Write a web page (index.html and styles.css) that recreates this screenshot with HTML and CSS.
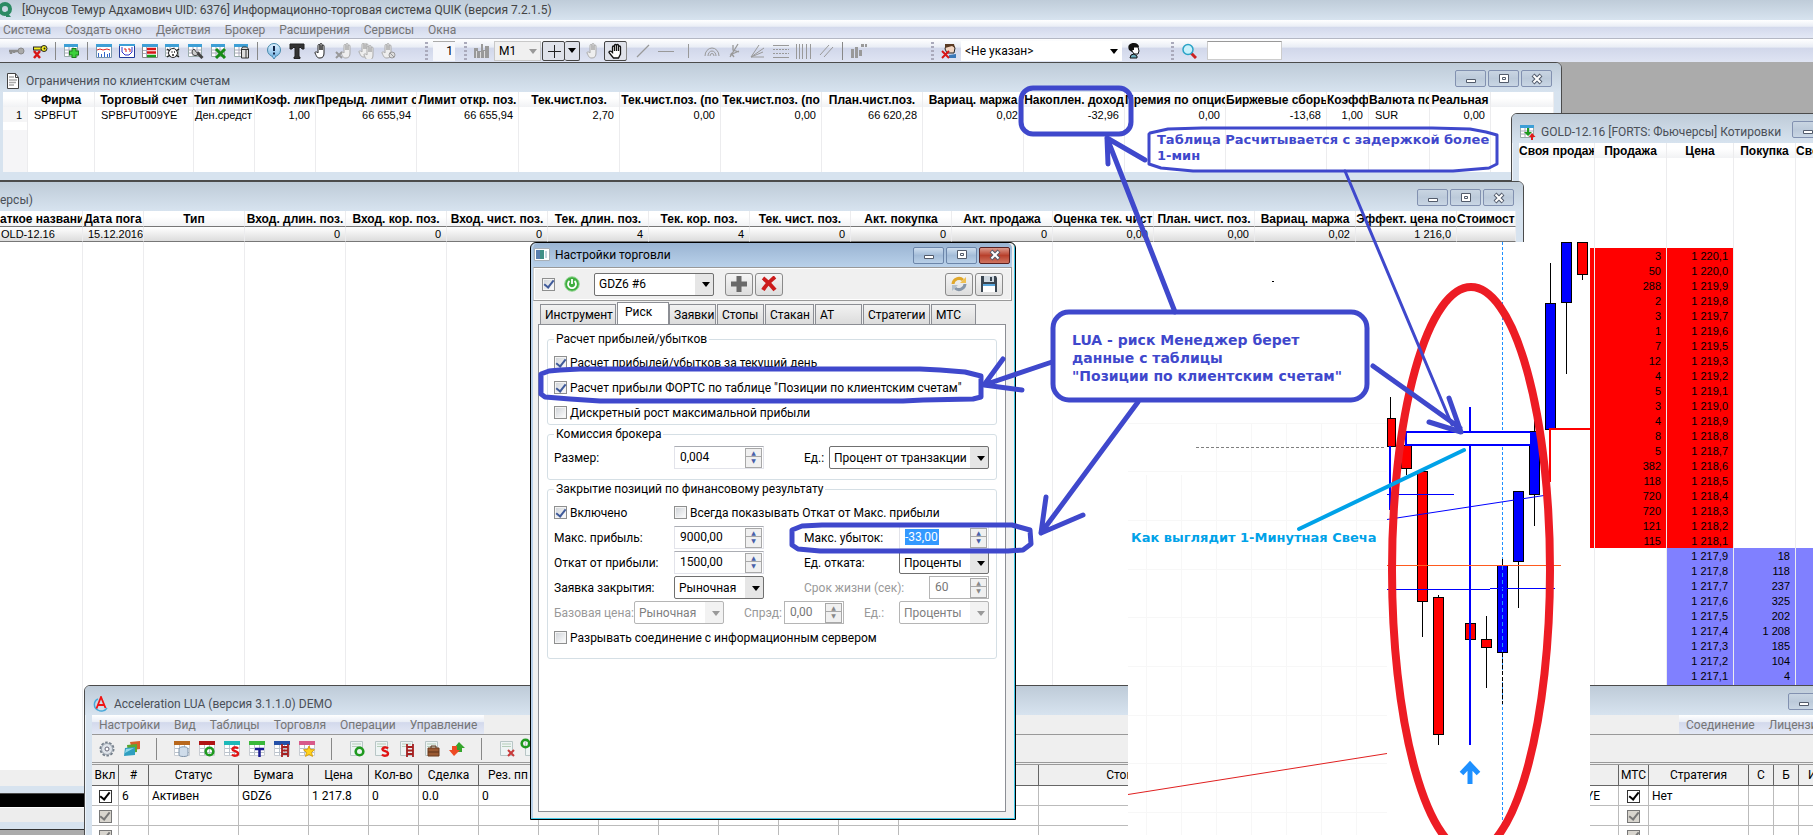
FILE: index.html
```html
<!DOCTYPE html>
<html lang="ru">
<head>
<meta charset="utf-8">
<title>QUIK (версия 7.2.1.5)</title>
<link rel="stylesheet" href="styles.css">
</head>
<body>
<svg class="sprite" aria-hidden="true">
  <defs>
    <linearGradient id="g-blue" x1="0" y1="0" x2="0" y2="1"><stop offset="0" stop-color="#dff1ff"/><stop offset="1" stop-color="#7db9e6"/></linearGradient>
    <symbol id="quik" viewBox="0 0 16 16"><circle cx="7" cy="7" r="5" fill="none" stroke="#2c8a63" stroke-width="4"/><path d="M8 9l5 6h-5z" fill="#2c8a63"/></symbol>
    <symbol id="doc" viewBox="0 0 16 16"><path d="M2.500.500h8l3 4v11h-11z" fill="#fff" stroke="#444"/><path d="M10.500.500v4h3" fill="none" stroke="#444"/><path d="M4 4h5M4 7h8M4 9.500h7M4 12h5" stroke="#aaa" stroke-width="1.500"/></symbol>
    <symbol id="key" viewBox="0 0 16 16"><path d="M0 8h10M2 8v3M5 8v2" stroke="#8c8c8c" stroke-width="2.500"/><circle cx="12" cy="8" r="3" fill="#aaa" stroke="#888"/></symbol>
    <symbol id="keyx" viewBox="0 0 16 16"><path d="M1 5.500h9" stroke="#222" stroke-width="4"/><path d="M2 5.500h9" stroke="#f6ee20" stroke-width="2"/><circle cx="12" cy="5.500" r="3" fill="#f6ee20" stroke="#222"/><circle cx="12.500" cy="5.500" r="1" fill="#222"/><path d="M2 8l6 7M8 8l-6 7" stroke="#d81616" stroke-width="2.500"/></symbol>
    <symbol id="grid" viewBox="0 0 16 16"><path fill="#fff" stroke="#9aa" d="M.5 1.500h13v12h-13z"/><path fill="#3d9fd6" d="M0 1h14v3H0z"/><path stroke="#aab" d="M1 7h12M1 10h12M5 4v9M9 4v9"/></symbol>
    <symbol id="gridplus" viewBox="0 0 16 16"><use href="#grid"/><path d="M10 5v10M5 10h10" stroke="#1c7c1c" stroke-width="5"/><path d="M10 6v8M6 10h8" stroke="#3cd03c" stroke-width="3"/></symbol>
    <symbol id="gridline" viewBox="0 0 16 16"><path fill="#fff" stroke="#7895aa" d="M.5 1.500h15v13H.5z"/><path fill="#3d9fd6" d="M0 1h16v3H0z"/><path d="M1 7l3-1 3 1 4-1 3 1" stroke="#d22" fill="none"/><path d="M2.500 14v-4M5.500 14v-3M8.500 14v-5M11.500 14v-3M13.500 14v-4" stroke="#36c" /></symbol>
    <symbol id="gridcurve" viewBox="0 0 16 16"><path fill="#fff" stroke="#223a9a" d="M.5 1.500h15v13H.5z"/><path fill="#3d9fd6" d="M0 1h16v2H0z"/><path d="M3 4v5l3 3h4l3-3V4" stroke="#33c" fill="none"/><path d="M5 6h2v3M9 6h2v3" stroke="#d22" fill="none"/></symbol>
    <symbol id="gridbook" viewBox="0 0 16 16"><path fill="#fff" stroke="#888" d="M.5 1.500h15v13H.5z"/><path fill="#3d9fd6" d="M0 1h16v3H0z"/><path d="M1 7.500h4M1 10.500h4M4.500 4v10" stroke="#aab"/><path d="M5 6h9M5 9.500h9" stroke="#d81616" stroke-width="2.500"/><path d="M5 13h9" stroke="#1c9a1c" stroke-width="2.500"/></symbol>
    <symbol id="gridface" viewBox="0 0 16 16"><use href="#grid"/><circle cx="8" cy="10" r="4.500" fill="#fff" stroke="#222"/><path d="M2 14l3-2M14 14l-3-2M2 6l3 2M14 6l-3 2M6.500 9h1M9 9h1M7 12h2" stroke="#222" stroke-width="1.500"/></symbol>
    <symbol id="gridtool" viewBox="0 0 16 16"><use href="#grid"/><path d="M6 6a3.500 3.500 0 1 0 5 3L8.500 9.500 7.500 8z" fill="#ccc" stroke="#444"/><path d="M9.500 10l5 5" stroke="#444" stroke-width="3"/></symbol>
    <symbol id="gridx" viewBox="0 0 16 16"><use href="#grid"/><path d="M5 6l9 9M14 6l-9 9" stroke="#178a17" stroke-width="3"/></symbol>
    <symbol id="griddb" viewBox="0 0 16 16"><use href="#grid"/><path d="M7.500 6v9h7V6l-2-2h-4z" fill="#ddd" stroke="#333"/><path d="M7.500 6.500h7M12 7v8" stroke="#333"/></symbol>
    <symbol id="bubble" viewBox="0 0 16 16"><circle cx="8" cy="7" r="6.500" fill="url(#g-blue)" stroke="#48a"/><path d="M6 13l2 3 2-3" fill="#9cf" stroke="#48a"/><path d="M8 3v5M8 9.500v2" stroke="#124" stroke-width="2"/></symbol>
    <symbol id="tee" viewBox="0 0 16 16"><path d="M1 1h14v5h-2l-1-1.500h-2V14h1v1.500H5V14h1V4.500H4L3 6H1z" fill="#333" stroke="#222"/></symbol>
    <symbol id="hand" viewBox="0 0 16 16"><path d="M6 9V2.500a1 1 0 0 1 2 0V7V1.500a1 1 0 0 1 2 0V7V3a1 1 0 0 1 2 0v7c0 3-1 5-4 5s-3-1-5-5c0-2 2-1 3 0z" fill="#fff" stroke="#222"/></symbol>
    <symbol id="handg" viewBox="0 0 16 16"><path d="M6 9V2.500a1 1 0 0 1 2 0V7V1.500a1 1 0 0 1 2 0V7V3a1 1 0 0 1 2 0v7c0 3-1 5-4 5s-3-1-5-5c0-2 2-1 3 0z" fill="#eee" stroke="#aaa"/></symbol>
    <symbol id="handgx" viewBox="0 0 16 16"><use href="#handg" x="3"/><path d="M1 9l6 6M7 9l-6 6" stroke="#999" stroke-width="2"/></symbol>
    <symbol id="hands" viewBox="0 0 16 16"><use href="#handg" x="-2" y="-1"/><use href="#handg" x="3" y="2"/></symbol>
    <symbol id="handno" viewBox="0 0 16 16"><use href="#handg" x="-2"/><circle cx="11" cy="12" r="3" fill="#ddd" stroke="#999"/><path d="M9 10l4 4" stroke="#999"/></symbol>
    <symbol id="palm" viewBox="0 0 16 16"><path d="M4.500 9V4a1 1 0 0 1 2 0v4V2.500a1 1 0 0 1 2 0V8V2.500a1 1 0 0 1 2 0V8V4a1 1 0 0 1 2 0v7l-2 4h-5L1 9.500c0-2 2-1.500 3.500 0z" fill="#fff" stroke="#111" stroke-width="1.300"/></symbol>
    <symbol id="bars" viewBox="0 0 16 16"><path d="M0 15V5h4v3h3V1h2v6h2V3h4v12z" fill="#999"/><path d="M2.500 8v7M6.500 9v6M10.500 8v7" stroke="#ddd"/></symbol>
    <symbol id="slash" viewBox="0 0 16 16"><path d="M2 14L14 2" stroke="#999" stroke-width="1.300"/></symbol>
    <symbol id="dash" viewBox="0 0 16 16"><path d="M0 8.500h16" stroke="#999"/></symbol>
    <symbol id="pipe" viewBox="0 0 16 16"><path d="M7.500 1v14" stroke="#999"/></symbol>
    <symbol id="arcs" viewBox="0 0 16 16"><g fill="none" stroke="#999"><path d="M1 13a7 8 0 0 1 14 0M4 13a4 5 0 0 1 8 0M6 13a2 2.500 0 0 1 4 0"/></g></symbol>
    <symbol id="fork" viewBox="0 0 16 16"><path d="M3 14L11 1M3 12l9-4M4 10l3 4M6 2v5l6 2" stroke="#999" fill="none" stroke-width="1.300"/></symbol>
    <symbol id="fan" viewBox="0 0 16 16"><path d="M1 14L9 2M1 14l13-9M1 14h13M1 14l12-5" stroke="#999" fill="none"/></symbol>
    <symbol id="hlines" viewBox="0 0 16 16"><path d="M0 2.500h16M0 14.500h16" stroke="#999"/><path d="M0 6.500h16M0 10.500h16" stroke="#999" stroke-dasharray="2 1"/></symbol>
    <symbol id="vlines" viewBox="0 0 16 16"><path d="M.5 1v15M3.500 1v15M6.500 1v15M10.500 1v15M14.500 1v15" stroke="#999"/></symbol>
    <symbol id="chan" viewBox="0 0 16 16"><path d="M1 12L10 2M5 14l9-10" stroke="#999"/></symbol>
    <symbol id="vol" viewBox="0 0 16 16"><path d="M1.500 6v9M5.500 4v11M9.500 7v6" stroke="#999" stroke-width="3"/><path d="M10 1h3v3h-3zM14 1h2v3h-2z" fill="#999"/></symbol>
    <symbol id="userx" viewBox="0 0 16 16"><path d="M5 2h7l2 3-1 5H6L4 6z" fill="#f3d6c2" stroke="#222"/><path d="M4 5V1h9l1 4-3-2z" fill="#5a3a22"/><path d="M8 12l7-1v4H8z" fill="#3a78b8"/><path d="M1 8l7 7M8 8l-7 7" stroke="#d81616" stroke-width="2"/></symbol>
    <symbol id="person" viewBox="0 0 16 16"><path d="M6 4h6l1 4-1 3H8L6 8z" fill="#fff" stroke="#111"/><path d="M3 7C1 2 4 0 8 0c3 0 5 2 5 4H8v3H6v2z" fill="#111"/><path d="M4 15l1-3 3-1 3 2v2z" fill="#6ab" stroke="#111"/></symbol>
    <symbol id="lens" viewBox="0 0 16 16"><path d="M10 10l5 5" stroke="#c22" stroke-width="3"/><circle cx="7" cy="6.500" r="5" fill="#c9f1fb" stroke="#2aa3c6" stroke-width="1.500"/></symbol>
    <symbol id="quotes" viewBox="0 0 16 16"><use href="#grid"/><path d="M7 4v4H4l4 4 4-4H9V4z" fill="#1c9a1c"/><path d="M12 9l3.500 4H13v3h-2v-3H9z" fill="#e01b1b"/></symbol>
    <symbol id="acc" viewBox="0 0 16 16"><path d="M5 3a6 6 0 0 0 0 11M5 14c3 2 7 1 9-2" fill="none" stroke="#49a8d8" stroke-width="1.500"/><path d="M3.500 12.500L8 1l4.500 11M5 9h6" fill="none" stroke="#f01414" stroke-width="1.800"/></symbol>
    <symbol id="gear" viewBox="0 0 16 16"><circle cx="8" cy="8" r="6.500" fill="#cfd5dc" stroke="#76808c" stroke-width="2" stroke-dasharray="2.500 1.500"/><circle cx="8" cy="8" r="5.500" fill="#dfe4ea" stroke="#9aa3ad"/><circle cx="8" cy="8" r="2" fill="#fff" stroke="#667"/></symbol>
    <symbol id="layers" viewBox="0 0 16 16"><path d="M6 1l10-1v8l-8 1z" fill="#d8602a"/><path d="M3 4l10-1v8l-9 1z" fill="#5aa832"/><path d="M1 7l10-1v8L0 15z" fill="#2f9fc0"/><path d="M2 8l8-1-9 5z" fill="#8fd8ea"/></symbol>
    <symbol id="sheet" viewBox="0 0 16 16"><path d="M.5 1.500h15v13H.5z" fill="#fff" stroke="#c8ccd2"/><path d="M0 0h16v4H0z" fill="currentColor"/><path d="M1 7.500h14M1 11.500h14M5.500 4v10M10.500 4v10" stroke="#b9c2cc"/></symbol>
    <symbol id="page" viewBox="0 0 16 16"><path d="M1.500.500h12v14h-12z" fill="#eef4f4" stroke="#b8c6c6"/><path d="M3 3h9M3 5.500h9" stroke="#b4cdb8"/></symbol>
    <symbol id="o" viewBox="0 0 16 16"><circle cx="10.500" cy="10.500" r="3.800" fill="none" stroke="#1f9a1f" stroke-width="2.600"/></symbol>
    <symbol id="s" viewBox="0 0 16 16"><path d="M14 7.500c-2-2-6-1-5.500 1s5.500 1.500 5.500 4-4 3-6 1" fill="none" stroke="#e01414" stroke-width="2.400"/></symbol>
    <symbol id="t" viewBox="0 0 16 16"><path d="M6 8h9M10.500 8v8" stroke="#1a1a90" stroke-width="2.500"/></symbol>
    <symbol id="ladder" viewBox="0 0 16 16"><path d="M8 3v13M14 3v13M8 6h6M8 9.500h6M8 13h6" stroke="#a52020" stroke-width="1.800"/></symbol>
    <symbol id="case" viewBox="0 0 16 16"><path d="M4 7h11v8H4z" fill="#9a5a32" stroke="#6a3a1c"/><path d="M7 7V5h5v2M4 11h11" fill="none" stroke="#5a3018"/></symbol>
    <symbol id="star" viewBox="0 0 16 16"><path d="M10 5l1.500 3.500 4 .3-3 2.600 1 4-3.500-2-3.500 2 1-4-3-2.600 4-.3z" fill="#ffd21c" stroke="#d8a010"/></symbol>
    <symbol id="drum" viewBox="0 0 16 16"><path d="M5 8c0-3 9-3 9 0v6c0 2-9 2-9 0z" fill="#cfdcea" stroke="#7f93a8"/></symbol>
    <symbol id="dir" viewBox="0 0 16 16"><path d="M10 1l6 6h-3v4h-5V7H5z" fill="#35a52c"/><path d="M5 15L0 9h3V5h5v4h3z" fill="#ee4a24"/></symbol>
    <symbol id="redx" viewBox="0 0 16 16"><path d="M9 9l6 6M15 9l-6 6" stroke="#c83a3a" stroke-width="2"/></symbol>
    <symbol id="min" viewBox="0 0 14 12"><path d="M2.500 6.500h9v3h-9z" fill="#fff" stroke="#525b6b"/></symbol>
    <symbol id="max" viewBox="0 0 14 12"><path d="M2.500 1.500h9v8h-9z" fill="#fff" stroke="#525b6b"/><path d="M5.500 4.500h3v2h-3z" fill="#fff" stroke="#525b6b"/></symbol>
    <symbol id="cls" viewBox="0 0 14 12"><path d="M3 2l8 8M11 2l-8 8" stroke="#525b6b" stroke-width="4"/><path d="M3.500 2.500l7 7M10.500 2.500l-7 7" stroke="#fff" stroke-width="2"/></symbol>
    <symbol id="app" viewBox="0 0 16 14"><path d="M.5.500h15v12H.5z" fill="#fff" stroke="#a8b0b8"/><path d="M2 2h8v9H2z" fill="#3f8f86"/><path d="M2 2h4v9H2z" fill="#5a7fb0"/><path d="M12 3v7" stroke="#8ab"/></symbol>
    <symbol id="power" viewBox="0 0 16 16"><circle cx="8" cy="8" r="7.300" fill="#3fae3f" stroke="#9ad89a"/><path d="M5.500 5a4 4 0 1 0 5 0M8 3v5" fill="none" stroke="#fff" stroke-width="1.800"/></symbol>
    <symbol id="plus" viewBox="0 0 16 16"><path d="M8 0v16M0 8h16" stroke="#6a6a6a" stroke-width="5"/></symbol>
    <symbol id="del" viewBox="0 0 16 16"><path d="M2 2c4 3 8 7 12 12M14 1C9 5 5 9 2 14" stroke="#cc1c1c" stroke-width="4" fill="none"/></symbol>
    <symbol id="sync" viewBox="0 0 16 16"><path d="M2 8a6 6 0 0 1 10-4" fill="none" stroke="#e0a82c" stroke-width="3"/><path d="M15 1v6H9z" fill="#f0c050"/><path d="M14 8a6 6 0 0 1-10 4" fill="none" stroke="#8796a8" stroke-width="3"/><path d="M1 15V9h6z" fill="#b4c0cc"/></symbol>
    <symbol id="disk" viewBox="0 0 16 16"><path d="M0 0h15l1 2v14H0z" fill="#3a4550"/><path d="M3 0h10v6H3z" fill="#cfd8e0"/><path d="M9 1h2v4H9z" fill="#3a4550"/><path d="M2 8h12v8H2z" fill="#fff"/><path d="M2 8h12v2H2z" fill="#5aa7dc"/></symbol>
  </defs>
</svg>

<div class="quik">
  <header class="quik__head">
    <div class="quik__title"><svg class="ico"><use href="#quik"/></svg><h1>[Юнусов Темур Адхамович UID: 6376] Информационно-торговая система QUIK (версия 7.2.1.5)</h1></div>
    <nav class="menu">
      <button>Система</button><button>Создать окно</button><button>Действия</button><button>Брокер</button><button>Расширения</button><button>Сервисы</button><button>Окна</button>
    </nav>
    <div class="bar">
      <div class="bar__group bar__group--main">
        <button aria-label="Подключиться"><svg class="ico"><use href="#key"/></svg></button>
        <button aria-label="Отключиться"><svg class="ico"><use href="#keyx"/></svg></button>
        <i class="sep"></i>
        <button aria-label="Добавить таблицу"><svg class="ico"><use href="#gridplus"/></svg></button>
        <i class="sep"></i>
        <button aria-label="График"><svg class="ico"><use href="#gridline"/></svg></button>
        <button aria-label="Кривая"><svg class="ico"><use href="#gridcurve"/></svg></button>
        <button aria-label="Котировки"><svg class="ico"><use href="#gridbook"/></svg></button>
        <button aria-label="Сделки"><svg class="ico"><use href="#gridface"/></svg></button>
        <button aria-label="Параметры"><svg class="ico"><use href="#gridtool"/></svg></button>
        <button aria-label="Экспорт"><svg class="ico"><use href="#gridx"/></svg></button>
        <button aria-label="База"><svg class="ico"><use href="#griddb"/></svg></button>
        <i class="sep"></i>
        <button aria-label="Сообщения"><svg class="ico"><use href="#bubble"/></svg></button>
        <button aria-label="Транзакции"><svg class="ico"><use href="#tee"/></svg></button>
        <button aria-label="Заявка"><svg class="ico"><use href="#hand"/></svg></button>
        <button aria-label="Снять заявку"><svg class="ico"><use href="#handgx"/></svg></button>
        <button aria-label="Снять все"><svg class="ico"><use href="#hands"/></svg></button>
        <button aria-label="Стоп"><svg class="ico"><use href="#handno"/></svg></button>
      </div>
      <div class="bar__group bar__group--count"><i class="grip"></i><input class="bar__count" value="1" aria-label="Количество"></div>
      <div class="bar__group bar__group--chart"><i class="grip"></i>
        <button aria-label="Тип графика"><svg class="ico"><use href="#bars"/></svg></button>
        <span class="combo combo--tf"><select aria-label="Интервал"><option>M1</option></select></span>
        <span class="split"><button class="on" aria-label="Перекрестие"><svg class="ico"><path d="M8.500 2v13M2 8.500h13" stroke="#222"/></svg></button><button class="on split__arrow" aria-label="Вид курсора"></button></span>
        <button aria-label="Выбор"><svg class="ico"><use href="#handg"/></svg></button>
        <button class="on" aria-label="Перемещение"><svg class="ico"><use href="#palm"/></svg></button>
        <i class="sep sep--near"></i>
        <button aria-label="Отрезок"><svg class="ico"><use href="#slash"/></svg></button>
        <button aria-label="Горизонталь"><svg class="ico"><use href="#dash"/></svg></button>
        <button aria-label="Вертикаль"><svg class="ico"><use href="#pipe"/></svg></button>
        <button aria-label="Дуги"><svg class="ico"><use href="#arcs"/></svg></button>
        <button aria-label="Вилы"><svg class="ico"><use href="#fork"/></svg></button>
        <button aria-label="Веер"><svg class="ico"><use href="#fan"/></svg></button>
        <button aria-label="Уровни"><svg class="ico"><use href="#hlines"/></svg></button>
        <button aria-label="Зоны"><svg class="ico"><use href="#vlines"/></svg></button>
        <button aria-label="Канал"><svg class="ico"><use href="#chan"/></svg></button>
        <i class="sep"></i>
        <button aria-label="Объём"><svg class="ico"><use href="#vol"/></svg></button>
      </div>
      <div class="bar__group bar__group--client"><i class="grip"></i>
        <button aria-label="Сбросить клиента"><svg class="ico"><use href="#userx"/></svg></button>
        <span class="combo combo--client"><select aria-label="Клиент"><option>&lt;Не указан&gt;</option></select></span>
        <button aria-label="Клиент"><svg class="ico"><use href="#person"/></svg></button>
      </div>
      <div class="bar__group bar__group--find"><i class="grip"></i>
        <button aria-label="Найти"><svg class="ico"><use href="#lens"/></svg></button>
        <input class="bar__find" aria-label="Поиск">
      </div>
    </div>
  </header>

  <main class="desk">
    <section class="win win--limits">
      <div class="win__title"><svg class="ico"><use href="#doc"/></svg><h2>Ограничения по клиентским счетам</h2>
        <div class="win__btns"><button aria-label="Свернуть"><svg><use href="#min"/></svg></button><button aria-label="Развернуть"><svg><use href="#max"/></svg></button><button aria-label="Закрыть"><svg><use href="#cls"/></svg></button></div></div>
      <div class="win__body">
      <table class="sheet">
        <colgroup><col class="w25"><col class="w67"><col class="w99"><col class="w61"><col class="w61"><col class="w101"><col class="w102"><col class="w101"><col class="w101"><col class="w101"><col class="w101"><col class="w101"><col class="w101"><col class="w101"><col class="w101"><col class="w42"><col class="w61"><col class="w61"><col></colgroup>
        <thead><tr><th></th><th>Фирма</th><th>Торговый счет</th><th>Тип лимит</th><th>Коэф. лик</th><th>Предыд. лимит о</th><th>Лимит откр. поз.</th><th>Тек.чист.поз.</th><th>Тек.чист.поз. (по</th><th>Тек.чист.поз. (по</th><th>План.чист.поз.</th><th>Вариац. маржа</th><th>Накоплен. доход</th><th>Премия по опцио</th><th>Биржевые сборы</th><th>Коэфф</th><th>Валюта по</th><th>Реальная</th><th></th></tr></thead>
        <tbody><tr><td class="rowno">1</td><td class="txt">SPBFUT</td><td class="txt">SPBFUT009YE</td><td class="txt0">Ден.средст</td><td>1,00</td><td>66 655,94</td><td>66 655,94</td><td>2,70</td><td>0,00</td><td>0,00</td><td>66 620,28</td><td>0,02</td><td>-32,96</td><td>0,00</td><td>-13,68</td><td>1,00</td><td class="txt">SUR</td><td>0,00</td><td></td></tr>
        <tr class="fill"><td class="rowfill"></td><td></td><td></td><td></td><td></td><td></td><td></td><td></td><td></td><td></td><td></td><td></td><td></td><td></td><td></td><td></td><td></td><td></td><td></td></tr></tbody>
      </table></div>
    </section>

    <section class="win win--quotes">
      <div class="win__title"><svg class="ico"><use href="#quotes"/></svg><h2>GOLD-12.16 [FORTS: Фьючерсы] Котировки</h2>
        <div class="win__btns"><button aria-label="Свернуть"><svg><use href="#min"/></svg></button><button aria-label="Развернуть"><svg><use href="#max"/></svg></button><button aria-label="Закрыть"><svg><use href="#cls"/></svg></button></div></div>
      <div class="win__body">
      <table class="sheet sheet--book">
        <colgroup><col class="w76"><col class="w72"><col class="w67"><col class="w62"><col></colgroup>
        <thead><tr><th>Своя продаж</th><th>Продажа</th><th>Цена</th><th>Покупка</th><th class="left">Своя покупка</th></tr></thead>
        <tbody>
        <tr class="gap"><td></td><td></td><td></td><td></td><td></td></tr>
        <tr class="ask"><td></td><td>3</td><td>1 220,1</td><td></td><td></td></tr>
        <tr class="ask"><td></td><td>50</td><td>1 220,0</td><td></td><td></td></tr>
        <tr class="ask"><td></td><td>288</td><td>1 219,9</td><td></td><td></td></tr>
        <tr class="ask"><td></td><td>2</td><td>1 219,8</td><td></td><td></td></tr>
        <tr class="ask"><td></td><td>3</td><td>1 219,7</td><td></td><td></td></tr>
        <tr class="ask"><td></td><td>1</td><td>1 219,6</td><td></td><td></td></tr>
        <tr class="ask"><td></td><td>7</td><td>1 219,5</td><td></td><td></td></tr>
        <tr class="ask"><td></td><td>12</td><td>1 219,3</td><td></td><td></td></tr>
        <tr class="ask"><td></td><td>4</td><td>1 219,2</td><td></td><td></td></tr>
        <tr class="ask"><td></td><td>5</td><td>1 219,1</td><td></td><td></td></tr>
        <tr class="ask"><td></td><td>3</td><td>1 219,0</td><td></td><td></td></tr>
        <tr class="ask"><td></td><td>4</td><td>1 218,9</td><td></td><td></td></tr>
        <tr class="ask"><td></td><td>8</td><td>1 218,8</td><td></td><td></td></tr>
        <tr class="ask"><td></td><td>5</td><td>1 218,7</td><td></td><td></td></tr>
        <tr class="ask"><td></td><td>382</td><td>1 218,6</td><td></td><td></td></tr>
        <tr class="ask"><td></td><td>118</td><td>1 218,5</td><td></td><td></td></tr>
        <tr class="ask"><td></td><td>720</td><td>1 218,4</td><td></td><td></td></tr>
        <tr class="ask"><td></td><td>720</td><td>1 218,3</td><td></td><td></td></tr>
        <tr class="ask"><td></td><td>121</td><td>1 218,2</td><td></td><td></td></tr>
        <tr class="ask"><td></td><td>115</td><td>1 218,1</td><td></td><td></td></tr>
        <tr class="bid"><td></td><td></td><td>1 217,9</td><td>18</td><td></td></tr>
        <tr class="bid"><td></td><td></td><td>1 217,8</td><td>118</td><td></td></tr>
        <tr class="bid"><td></td><td></td><td>1 217,7</td><td>237</td><td></td></tr>
        <tr class="bid"><td></td><td></td><td>1 217,6</td><td>325</td><td></td></tr>
        <tr class="bid"><td></td><td></td><td>1 217,5</td><td>202</td><td></td></tr>
        <tr class="bid"><td></td><td></td><td>1 217,4</td><td>1 208</td><td></td></tr>
        <tr class="bid"><td></td><td></td><td>1 217,3</td><td>185</td><td></td></tr>
        <tr class="bid"><td></td><td></td><td>1 217,2</td><td>104</td><td></td></tr>
        <tr class="bid"><td></td><td></td><td>1 217,1</td><td>4</td><td></td></tr>
        <tr class="bid"><td></td><td></td><td></td><td></td><td></td></tr>
        </tbody>
      </table></div>
    </section>

    <section class="win win--pos">
      <div class="win__title"><h2>ерсы)</h2>
        <div class="win__btns"><button aria-label="Свернуть"><svg><use href="#min"/></svg></button><button aria-label="Развернуть"><svg><use href="#max"/></svg></button><button aria-label="Закрыть"><svg><use href="#cls"/></svg></button></div></div>
      <div class="win__body">
      <table class="sheet sheet--pos">
        <colgroup><col class="w83"><col class="w61"><col class="w101"><col class="w101"><col class="w101"><col class="w101"><col class="w101"><col class="w101"><col class="w101"><col class="w101"><col class="w101"><col class="w101"><col class="w101"><col class="w101"><col class="w101"><col></colgroup>
        <thead><tr><th class="left">аткое названи</th><th>Дата пога</th><th>Тип</th><th>Вход. длин. поз.</th><th>Вход. кор. поз.</th><th>Вход. чист. поз.</th><th>Тек. длин. поз.</th><th>Тек. кор. поз.</th><th>Тек. чист. поз.</th><th>Акт. покупка</th><th>Акт. продажа</th><th>Оценка тек. чист</th><th>План. чист. поз.</th><th>Вариац. маржа</th><th>Эффект. цена по</th><th>Стоимость</th></tr></thead>
        <tbody><tr class="sel"><td class="txt0">OLD-12.16</td><td class="txt4">15.12.2016</td><td></td><td>0</td><td>0</td><td>0</td><td>4</td><td>4</td><td>0</td><td>0</td><td>0</td><td>0,00</td><td>0,00</td><td>0,02</td><td>1 216,0</td><td></td></tr>
        <tr class="fill"><td></td><td></td><td></td><td></td><td></td><td></td><td></td><td></td><td></td><td></td><td></td><td></td><td></td><td></td><td></td><td></td></tr></tbody>
      </table></div>
      <div class="scroll"></div>
    </section>
    <div class="ticker"></div>

    <section class="win win--lua">
      <div class="win__title"><svg class="ico"><use href="#acc"/></svg><h2>Acceleration LUA (версия 3.1.1.0) DEMO</h2>
        <div class="win__btns"><button aria-label="Свернуть"><svg><use href="#min"/></svg></button><button aria-label="Развернуть"><svg><use href="#max"/></svg></button><button aria-label="Закрыть"><svg><use href="#cls"/></svg></button></div></div>
      <div class="win__body lua">
        <div class="lua__menus">
          <nav class="menu menu--lua"><button>Настройки</button><button>Вид</button><button>Таблицы</button><button>Торговля</button><button>Операции</button><button>Управление</button></nav>
          <nav class="menu menu--lua menu--right"><button>Соединение</button><button>Лицензия</button></nav>
        </div>
        <div class="lua__bar">
          <button aria-label="Настройки"><svg class="ico"><use href="#gear"/></svg></button>
          <button aria-label="Окна"><svg class="ico"><use href="#layers"/></svg></button>
          <i class="sep"></i>
          <button aria-label="Журнал"><svg class="ico c-brown"><use href="#sheet"/><use href="#drum"/></svg></button>
          <button aria-label="Заявки"><svg class="ico c-red"><use href="#sheet"/><use href="#o"/></svg></button>
          <button aria-label="Стоп-заявки"><svg class="ico c-cyan"><use href="#sheet"/><use href="#s"/></svg></button>
          <button aria-label="Сделки"><svg class="ico c-green"><use href="#sheet"/><use href="#t"/></svg></button>
          <button aria-label="Стакан"><svg class="ico c-blue"><use href="#sheet"/><use href="#ladder"/></svg></button>
          <button aria-label="Избранное"><svg class="ico c-pink"><use href="#sheet"/><use href="#star"/></svg></button>
          <i class="sep"></i>
          <button aria-label="Новая заявка"><svg class="ico"><use href="#page"/><use href="#o"/></svg></button>
          <button aria-label="Новая стоп-заявка"><svg class="ico"><use href="#page"/><use href="#s"/></svg></button>
          <button aria-label="Лестница"><svg class="ico"><use href="#page"/><use href="#ladder"/></svg></button>
          <button aria-label="Портфель"><svg class="ico"><use href="#page"/><use href="#case"/></svg></button>
          <button aria-label="Разворот"><svg class="ico"><use href="#dir"/></svg></button>
          <i class="sep"></i>
          <button aria-label="Удалить"><svg class="ico"><use href="#page"/><use href="#redx"/></svg></button>
          <button aria-label="Обновить"><svg class="ico"><use href="#page"/><use href="#o" x="-9" y="-8"/></svg></button>
        </div>
        <table class="robots">
          <colgroup><col class="w27"><col class="w30"><col class="w90"><col class="w70"><col class="w60"><col class="w50"><col class="w60"><col class="w60"><col class="w60"><col class="w60"><col class="w60"><col class="w60"><col class="w60"><col class="w60"><col class="w140"><col class="w172"><col class="w200"><col class="w208"><col class="w30"><col class="w100"><col class="w25"><col class="w25"><col></colgroup>
          <thead><tr><th>Вкл</th><th>#</th><th>Статус</th><th>Бумага</th><th>Цена</th><th>Кол-во</th><th>Сделка</th><th class="left">Рез. пп</th><th></th><th></th><th></th><th></th><th></th><th></th><th></th><th>Стопы</th><th></th><th></th><th>МТС</th><th>Стратегия</th><th>С</th><th>Б</th><th class="left">И</th></tr></thead>
          <tbody>
          <tr><td><input type="checkbox" class="tick tick--flat" checked aria-label="Включить"></td><td>6</td><td>Активен</td><td>GDZ6</td><td>1 217.8</td><td>0</td><td>0.0</td><td>0</td><td></td><td></td><td></td><td></td><td></td><td></td><td></td><td></td><td></td><td class="acct">SPBFUT009YE</td><td><input type="checkbox" class="tick tick--flat" checked aria-label="МТС"></td><td>Нет</td><td></td><td></td><td></td></tr>
          <tr><td><input type="checkbox" class="tick tick--flat" checked disabled aria-label="Включить 2"></td><td></td><td></td><td></td><td></td><td></td><td></td><td></td><td></td><td></td><td></td><td></td><td></td><td></td><td></td><td></td><td></td><td></td><td><input type="checkbox" class="tick tick--flat" checked disabled aria-label="МТС 2"></td><td></td><td></td><td></td><td></td></tr>
          <tr><td><input type="checkbox" class="tick tick--flat" checked disabled aria-label="Включить 3"></td><td></td><td></td><td></td><td></td><td></td><td></td><td></td><td></td><td></td><td></td><td></td><td></td><td></td><td></td><td></td><td></td><td></td><td><input type="checkbox" class="tick tick--flat" checked disabled aria-label="МТС 3"></td><td></td><td></td><td></td><td></td></tr>
          </tbody>
        </table>
      </div>
    </section>

    <svg class="ink" role="img" aria-label="График GOLD-12.16">
      <path fill="#fff" d="M1128 242h462v700h-462z"/>
      <path stroke="#f7f7f7" d="M1146.500 475v400M1181.500 475v400M1216.500 423v452M1251.500 423v452M1286.500 423v452M1321.500 423v452M1356.500 423v452M1128 423.500h259M1128 471.500h259M1128 520.500h259M1128 569.500h259M1128 617.500h259M1128 666.500h259M1128 715.500h259M1128 763.500h259M1128 812.500h259"/>
      <path d="M1196 447.500h189" stroke="#808080" stroke-dasharray="3 2"/>
      <path d="M1128 794.500L1387 753.500" stroke="#e02020"/>
      <path d="M1272 281h2v1h-2z"/>
      <path stroke="#1e90ff" stroke-dasharray="3 2" d="M1502.500 242v700"/>
      <g stroke="#000" shape-rendering="crispEdges">
        <path d="M1390.500 397v21M1406.500 469v6M1422.500 602v35M1438.500 595v150M1486.500 616v72M1502.500 559v6M1518.500 562v46M1534.500 421v105M1550.500 263v40M1566.500 303v71M1582.500 275v5"/>
        <path stroke-dasharray="4 2" d="M1502.500 653v51"/>
        <g fill="#f00"><path d="M1387.500 418.500h8v28h-8zM1401.500 445.500h10v23h-10zM1417.500 471.500h10v130h-10zM1433.500 597.500h10v137h-10zM1465.500 623.500h10v16h-10zM1481.500 639.500h10v8h-10zM1577.500 242.500h10v32h-10z"/></g>
        <g fill="#00f"><path d="M1497.500 565.500h10v87h-10zM1513.500 491.500h10v70h-10zM1529.500 431.500h10v63h-10zM1545.500 303.500h10v126h-10zM1561.500 242.500h10v60h-10z"/></g>
      </g>
      <path stroke="#1e90ff" stroke-dasharray="4 3" d="M1502.500 566v86"/>
      <g fill="none" stroke="#00f">
        <path d="M1387 494.500h67M1387 519.500L1544 495.500M1387 589.500h103M1490 588.500h65"/>
        <path stroke-width="2" d="M1390 446v64M1470 407v338"/>
        <path stroke-width="2" fill="#fff" d="M1530 432h-124v13h124"/>
      </g>
      <path d="M1387 565.500h174" stroke="#ff5a1e"/>
      <path d="M1590 429h-40v53" fill="none" stroke="#f00" stroke-width="2"/>
      <ellipse cx="1471" cy="570" rx="79" ry="283" fill="none" stroke="#ed1c24" stroke-width="8"/>
      <path d="M1470 784v-20M1461.500 773.500l8.500-9 8.500 9" fill="none" stroke="#1e90ff" stroke-width="5"/>
    </svg>

    <section class="dlg" aria-label="Настройки торговли">
      <div class="dlg__title"><svg class="ico"><use href="#app"/></svg><h2>Настройки торговли</h2>
        <div class="dlg__btns"><button aria-label="Свернуть"><svg><use href="#min"/></svg></button><button aria-label="Развернуть"><svg><use href="#max"/></svg></button><button class="close" aria-label="Закрыть"><svg><use href="#cls"/></svg></button></div></div>
      <div class="dlg__bar">
        <input type="checkbox" class="tick" checked aria-label="Робот включён">
        <button class="bare" aria-label="Запуск"><svg class="ico"><use href="#power"/></svg></button>
        <span class="pick pick--robot"><select aria-label="Робот"><option>GDZ6 #6</option></select></span>
        <button class="push" aria-label="Добавить"><svg class="ico"><use href="#plus"/></svg></button>
        <button class="push" aria-label="Удалить"><svg class="ico"><use href="#del"/></svg></button>
        <button class="push push--end" aria-label="Обновить"><svg class="ico"><use href="#sync"/></svg></button>
        <button class="push" aria-label="Сохранить"><svg class="ico"><use href="#disk"/></svg></button>
      </div>
      <div class="dlg__body">
        <div class="tabs" role="tablist"><button class="t77" role="tab">Инструмент</button><button class="tab--on t52" role="tab" aria-selected="true">Риск</button><button class="t48" role="tab">Заявки</button><button class="t48" role="tab">Стопы</button><button class="t50" role="tab">Стакан</button><button class="t48" role="tab">AT</button><button class="t68" role="tab">Стратегии</button><button class="t45" role="tab">МТС</button></div>
        <div class="pane">
          <fieldset class="fs"><legend>Расчет прибылей/убытков</legend>
            <div class="row"><label><input type="checkbox" class="tick" checked>Расчет прибылей/убытков за текущий день</label></div>
            <div class="row"><label><input type="checkbox" class="tick" checked>Расчет прибыли ФОРТС по таблице "Позиции по клиентским счетам"</label></div>
            <div class="row"><label><input type="checkbox" class="tick">Дискретный рост максимальной прибыли</label></div>
          </fieldset>
          <fieldset class="fs fs--fee"><legend>Комиссия брокера</legend>
            <div class="row"><label for="fee" class="l120">Размер:</label><span class="spin w90"><input id="fee" value="0,004"></span><label for="unit" class="l25 mid">Ед.:</label><span class="pick w160"><select id="unit"><option>Процент от транзакции</option></select></span></div>
          </fieldset>
          <fieldset class="fs fs--close"><legend>Закрытие позиций по финансовому результату</legend>
            <div class="row"><label class="l120"><input type="checkbox" class="tick" checked>Включено</label><label><input type="checkbox" class="tick">Всегда показывать Откат от Макс. прибыли</label></div>
            <div class="row"><label for="mp" class="l120">Макс. прибыль:</label><span class="spin w90"><input id="mp" value="9000,00"></span><label for="ml" class="l95 mid">Макс. убыток:</label><span class="spin spin--focus w90"><input id="ml" value="-33,00"></span></div>
            <div class="row"><label for="ro" class="l120">Откат от прибыли:</label><span class="spin w90"><input id="ro" value="1500,00"></span><label for="ru" class="l95 mid">Ед. отката:</label><span class="pick w90"><select id="ru"><option>Проценты</option></select></span></div>
            <div class="row"><label for="co" class="l120">Заявка закрытия:</label><span class="pick w90"><select id="co"><option>Рыночная</option></select></span><label for="tt" class="l125 mid off">Срок жизни (сек):</label><span class="spin off w60"><input id="tt" value="60" disabled></span></div>
            <div class="row"><label for="bp" class="l80 off">Базовая цена:</label><span class="pick off w90"><select id="bp" disabled><option>Рыночная</option></select></span><label for="sp" class="l40 near off">Спрэд:</label><span class="spin off w60"><input id="sp" value="0,00" disabled></span><label for="su" class="l35 near off">Ед.:</label><span class="pick off w90"><select id="su" disabled><option>Проценты</option></select></span></div>
            <div class="row"><label><input type="checkbox" class="tick">Разрывать соединение с информационным сервером</label></div>
          </fieldset>
        </div>
      </div>
    </section>

    <svg class="ink ink--notes" role="img" aria-label="Пояснения">
      <g fill="none" stroke="#3f48cc" stroke-width="5" stroke-linecap="round" stroke-linejoin="round">
        <rect x="1021" y="88" width="110" height="46" rx="12"/>
        <rect x="1053" y="312" width="314" height="88" rx="16"/>
        <path stroke-width="3" d="M1150 133l18-4 34-1h230l38 1 16 3 11 3v29l-8 4-36 3h-260l-32-3-12-4v-30"/>
        <path d="M1145 160l-38-22M1175 312l-68-174M1107 138l1 26"/>
        <path stroke-width="3" d="M1345 171L1452 425"/>
        <path d="M1373 366l87 62M1449 398l12 34-32-10"/>
        <path d="M1052 362l-68 23 19-26M984 385l38 5"/>
        <path d="M560 370l20-1h340l20 1 25 2 16 4v21l-8 2-50 1-20 1H600l-30-2-25-2-4-3v-20l8-3z"/>
        <path d="M792 545v-15l10-4 20-1h190l18 5 1 14-8 6-15 1H820l-22-2z"/>
        <path d="M1138 402l-97 131 5-36M1041 533l42-18"/>
      </g>
      <path d="M1299 529L1464 450" stroke="#00a2e8" stroke-width="4" stroke-linecap="round"/>
      <g class="note">
        <text x="1157" y="144">Таблица Расчитывается с задержкой более</text><text x="1157" y="160">1-мин</text>
        <text x="1131" y="542" class="note__sky">Как выглядит 1-Минутная Свеча</text>
      </g>
      <g class="note note--big"><text x="1072" y="345">LUA - риск Менеджер берет</text><text x="1072" y="363">данные с таблицы</text><text x="1072" y="381">"Позиции по клиентским счетам"</text></g>
    </svg>
  </main>
</div>
</body>
</html>
```
FILE: styles.css
```css
* { box-sizing: border-box; }
body { margin: 0; font: 12px/16px Roboto, "Open Sans", sans-serif; color: #000; }
h1, h2 { margin: 0; font-weight: 400; font-size: 12px; line-height: 16px; white-space: nowrap; }
button, input, select { font: inherit; color: inherit; margin: 0; padding: 0; border: 0; background: none; }
.sprite { position: absolute; width: 0; height: 0; }
.ico { width: 16px; height: 16px; display: block; flex: none; overflow: visible; }

.quik { position: relative; min-height: 100vh; background: #ababab; overflow: hidden; }
.quik__title { height: 20px; display: flex; align-items: center; gap: 8px; background: linear-gradient(#bfccd9, #d7e3ef); color: #444; }
.quik__title .ico { margin-left: -2px; }
.menu { display: flex; height: 19px; padding: 1px 3px 0; gap: 14px; color: #757575; background: linear-gradient(#fff, #eaeef6 35%, #d3d9ec 40%, #e3e8f5); border-bottom: 1px solid #b4b8c4; }
.bar { display: flex; height: 23px; align-items: center; background: linear-gradient(#fff, #e9edf5 35%, #d1d7ea 40%, #dfe4f3); }
.bar__group { display: flex; align-items: center; gap: 7px; height: 22px; }
.bar__group--main { margin-left: 9px; width: 416px; }
.bar__group--count { width: 39px; gap: 5px; }
.bar__group--chart { width: 467px; }
.bar__group--client { width: 240px; }
.sep { width: 1px; height: 18px; background: #888; margin: 0 1px 0 0; flex: none; }
.sep--near { margin-left: -5px; }
.grip { width: 3px; height: 18px; flex: none; background: repeating-linear-gradient(#aab 0 2px, transparent 2px 4px); }
.bar__count { width: 22px; height: 20px; text-align: right; padding-right: 2px; background: #f6f7fb; border-top: 1px solid #aaa; }
.bar__find { width: 75px; height: 19px; margin-left: 3px; background: #fff; border: 1px solid #ccc; border-top-color: #999; }
.combo { position: relative; display: flex; height: 20px; margin: 0 -3px; flex: none; }
.combo select { appearance: none; width: 100%; padding: 0 4px; background: #fff; }
.combo::after, .split__arrow::after, .pick::after { content: ""; border: 4px solid transparent; border-top: 5px solid #000; border-bottom: 0; }
.combo::after, .pick::after { position: absolute; right: 4px; top: 50%; margin-top: -2px; pointer-events: none; }
.combo--tf { width: 47px; }
.combo--tf select { background: #f0f0f0; border: 1px solid #c8c8c8; }
.combo--tf::after { border-top-color: #999; }
.combo--client { width: 161px; }
.split { display: flex; margin: 0 -3px; }
.on { display: flex; align-items: center; justify-content: center; width: 23px; height: 20px; border: 1px solid #444; border-radius: 2px; background: #dfe2ea; flex: none; }
.bar__group > .on { margin: 0 -3px; }
.split__arrow { width: 15px; border-left: 0; }

.win { position: absolute; display: flex; flex-direction: column; border: 1px solid #4b4b4b; border-radius: 6px 6px 0 0; background: #d7e3ef; overflow: hidden; box-shadow: inset 1px 1px #edf3f9; }
.win__title { display: flex; align-items: center; flex: none; height: 29px; gap: 5px; padding: 6px 9px 0 8px; color: #4a4f57; background: linear-gradient(#becbd8, #d7e3ef); }
.win__btns, .dlg__btns { display: flex; gap: 2px; margin-left: auto; margin-bottom: 4px; }
.win__btns button { width: 31px; height: 17px; border: 1px solid #8291b0; border-radius: 2px; background: linear-gradient(#c9d5e2, #bccada 50%, #c9d6e4); display: flex; align-items: center; justify-content: center; }
.win__btns svg, .dlg__btns svg { width: 14px; height: 12px; }
.win__body { flex: 1; min-height: 0; margin: 0 7px; background: #fff; overflow: hidden; }
.win--limits { left: -6px; top: 62px; width: 1568px; height: 119px; }
.win--limits .win__title { padding-left: 10px; }
.win--limits .win__body { margin: 0 7px 8px 8px; }
.win--quotes { left: 1511px; right: -86px; top: 113px; height: 640px; }
.win--pos { left: -7px; top: 181px; width: 1531px; height: 613px; }
.win--pos .win__title { padding-left: 6px; }
.win--pos .win__body { margin-left: 6px; }
.scroll { height: 16px; margin: 0 7px 7px 6px; background: #efefef; flex: none; }
.ticker { position: absolute; top: 794px; left: 0; width: 84px; height: 36px; background: linear-gradient(#000 0 13px, #fff 13px 14px, #ededed 14px 28px, #d7e3ef 28px 35px, #333 35px); }

.sheet { width: 100%; height: 100%; table-layout: fixed; border-collapse: separate; border-spacing: 0; font: 11px/13px "Liberation Sans", sans-serif; }
.sheet th, .sheet td { padding: 0; overflow: hidden; white-space: nowrap; border-right: 1px solid #ececee; height: 15px; }
.sheet th { padding-top: 1px; font-size: 12px; background: linear-gradient(#fff 40%, #f1f2f4); text-align: center; }
.sheet td { text-align: right; padding: 1px 5px 0 0; }
.sheet .left { text-align: left; }
.sheet td.txt { text-align: left; padding-left: 6px; }
.sheet td.txt0 { text-align: left; padding: 1px 0 0 1px; }
.sheet td.txt4 { text-align: left; padding: 1px 0 0 5px; }
.sheet td.rowno { background: #f5f5f6; }
.sheet .fill td { height: auto; }
.sheet td.rowfill { background: linear-gradient(#fff 8px, #f5f5f7 8px); }
.sheet .sel td { background: linear-gradient(#fff, #dcdcdc); border-top: 1px solid #777; border-bottom: 1px solid #777; }
.sheet--book { height: auto; }
.sheet--book .gap td { height: 90px; }
.sheet--book tr:not(.gap) td { background-clip: padding-box; }
.ask td:nth-child(-n+3) { background: #f00; }
.bid td:nth-child(n+3) { background: #8080ff; }

.w25 { width: 25px; } .w27 { width: 27px; } .w30 { width: 30px; } .w42 { width: 42px; } .w50 { width: 50px; } .w60 { width: 60px; } .w61 { width: 61px; } .w62 { width: 62px; } .w67 { width: 67px; } .w70 { width: 70px; } .w72 { width: 72px; } .w76 { width: 76px; } .w83 { width: 83px; } .w90 { width: 90px; } .w99 { width: 99px; } .w100 { width: 100px; } .w101 { width: 101px; } .w102 { width: 102px; } .w140 { width: 140px; } .w160 { width: 160px; } .w172 { width: 172px; } .w200 { width: 200px; } .w208 { width: 208px; }

.win--lua { left: 84px; right: -82px; top: 685px; height: 180px; }
.lua { background: #efefef; }
.lua__menus { display: flex; height: 20px; border-bottom: 1px solid #999; }
.menu--lua { border: 0; padding: 1px 7px 0; }
.menu--right { margin-left: auto; width: 208px; }
.lua__bar { display: flex; align-items: center; gap: 9px; height: 28px; padding-left: 7px; border-bottom: 1px solid #999; }
.lua__bar .sep { height: 22px; margin: 0 8px 0 7px; }
.c-brown { color: #b8671c; } .c-red { color: #b01414; } .c-cyan { color: #1cb8b8; } .c-green { color: #3ab83a; } .c-blue { color: #2450a8; } .c-pink { color: #d85a8a; }
.robots { width: 100%; table-layout: fixed; border-collapse: separate; border-spacing: 0; margin-top: 1px; border-top: 1px solid #999; line-height: 14px; }
.robots th, .robots td { padding: 0; overflow: hidden; white-space: nowrap; height: 20px; border-right: 1px solid #bbb; border-bottom: 1px solid #bbb; }
.robots th { font-weight: 400; height: 21px; background: #efefef; border-color: #666; }
.robots th.left { text-align: left; padding-left: 9px; }
.robots td { background: #fff; padding-left: 3px; }
.robots td.acct { text-align: right; padding-right: 18px; }
.robots td:has(.tick) { text-align: center; padding: 0; }
.robots .tick { vertical-align: middle; }

.tick { appearance: none; width: 13px; height: 13px; flex: none; border: 1px solid #8e8f8f; background: linear-gradient(135deg, #cdd1d6, #fff); box-shadow: inset 0 0 0 1px #f4f4f4; display: inline-grid; place-items: center; }
.tick:checked::after { content: ""; width: 4px; height: 8px; border: solid #3f5a9a; border-width: 0 2px 2px 0; transform: translateY(-1px) rotate(38deg); }
.tick--flat { background: #fff; border: 1px solid #333; box-shadow: none; }
.tick--flat:checked::after { border-color: #000; }
.tick--flat:disabled { background: #d8d5ce; border-color: #777; }
.tick--flat:disabled::after { border-color: #777; }

.dlg { position: absolute; left: 530px; top: 242px; width: 486px; height: 578px; display: flex; flex-direction: column; border: 1px solid #000; border-radius: 6px 6px 0 0; background: #f0f0f0; box-shadow: inset -1px -1px #3fc8e8, inset 2px 0 #b9d1ea; padding: 0 3px 7px 2px; }
.dlg__title { display: flex; height: 24px; align-items: center; padding: 0 2px 0 1px; gap: 5px; flex: none; background: linear-gradient(#9ab4d2, #b9d1ea); border-radius: 5px 5px 0 0; }
.dlg__title .ico { height: 14px; }
.dlg__btns { margin-bottom: 0; }
.dlg__btns button { width: 31px; height: 17px; display: flex; align-items: center; justify-content: center; border: 1px solid #6c86aa; border-radius: 2px; background: linear-gradient(#cfdff0, #a3bcd8 50%, #b9d0e8); }
.dlg__btns .close { border-color: #5a2020; background: linear-gradient(#dd9a8c, #b8402c 50%, #cf7460); }
.dlg__bar { display: flex; align-items: center; height: 34px; padding: 0 8px; flex: none; border: 1px solid #999; border-left-color: #ccc; background: #f0f0f0; box-shadow: inset 0 0 0 1px #fff; }
.bare { margin: 0 14px 0 9px; }
.pick { position: relative; display: flex; height: 23px; flex: none; }
.pick select { appearance: none; width: 100%; padding: 0 4px; border: 1px solid #707070; border-radius: 2px; background: linear-gradient(90deg, #fff calc(100% - 18px), #e6e6e6 calc(100% - 18px)); }
.pick.off::after { border-top-color: #999; }
.pick.off select { border-color: #b5b5b5; color: #808080; opacity: 1; background: linear-gradient(90deg, #fff calc(100% - 18px), #f2f2f2 calc(100% - 18px)); }
.pick--robot { width: 120px; margin-right: 9px; }
.push { width: 28px; height: 23px; margin-left: 2px; display: flex; align-items: center; justify-content: center; border: 1px solid #8a8a8a; border-radius: 3px; background: linear-gradient(#f5f5f5, #ddd); flex: none; }
.push.push--end { margin-left: auto; }
.dlg__body { flex: 1; display: flex; flex-direction: column; padding: 1px 6px 0 5px; min-height: 0; }
.tabs { display: flex; align-items: flex-end; height: 22px; padding-left: 2px; }
.tabs button { height: 20px; flex: none; padding: 0 4px; text-align: left; border: 1px solid #8c8e94; border-bottom: 0; margin-right: 1px; background: linear-gradient(#f2f2f2, #dcdcdc); white-space: nowrap; }
.tabs .tab--on { height: 22px; padding: 0 7px 3px; background: #fff; margin-right: 0; }
.t45 { width: 45px; } .t48 { width: 47px; } .t50 { width: 49px; } .t52 { width: 52px; } .t68 { width: 67px; } .t77 { width: 76px; }
.pane { flex: 1; border: 1px solid #8c8e94; background: #fff; padding: 6px 8px; }
.fs { margin: 0 0 1px; padding: 0 7px 0 6px; min-width: 0; border: 1px solid #d5dfe5; border-radius: 3px; height: 94px; }
.fs legend { padding: 0 2px; height: 16px; }
.fs--fee { height: 54px; }
.fs--close { height: 178px; }
.row { display: flex; align-items: center; height: 25px; white-space: nowrap; }
.fs .row:first-of-type { margin-top: 3px; }
.row label { display: flex; align-items: center; gap: 3px; }
.off { color: #999; }
.mid { margin-left: 40px; } .near { margin-left: 20px; }
.l25 { width: 25px; } .l35 { width: 35px; } .l40 { width: 40px; } .l80 { width: 80px; } .l95 { width: 95px; } .l120 { width: 120px; } .l125 { width: 125px; }
.spin { position: relative; display: flex; height: 23px; flex: none; }
.spin input { width: 100%; padding: 0 22px 2px 5px; border: 1px solid #e2e3ea; border-top-color: #abadb3; background: #fff; }
.spin.off input { border-color: #b5b5b5; color: #777; }
.spin--focus input { color: #fff; background: linear-gradient(#39f, #39f) 5px 2px / 34px 16px no-repeat; }
.spin::before, .spin::after { position: absolute; right: 2px; width: 15px; height: 10px; border: 1px solid #a8a8a8; background: #f0f0f0; color: #4860a8; font: 6px/8px "DejaVu Sans", sans-serif; text-align: center; }
.spin::before { content: "▲"; top: 2px; }
.spin::after { content: "▼"; bottom: 1px; }
.spin.off::before, .spin.off::after { color: #888; }

.ink { position: absolute; left: 0; top: 0; width: 100%; height: 100%; pointer-events: none; }
.note { font: 700 13px "DejaVu Sans", sans-serif; fill: #3f48cc; }
.note--big { font-size: 14px; }
.note__sky { fill: #00a2e8; }
```
